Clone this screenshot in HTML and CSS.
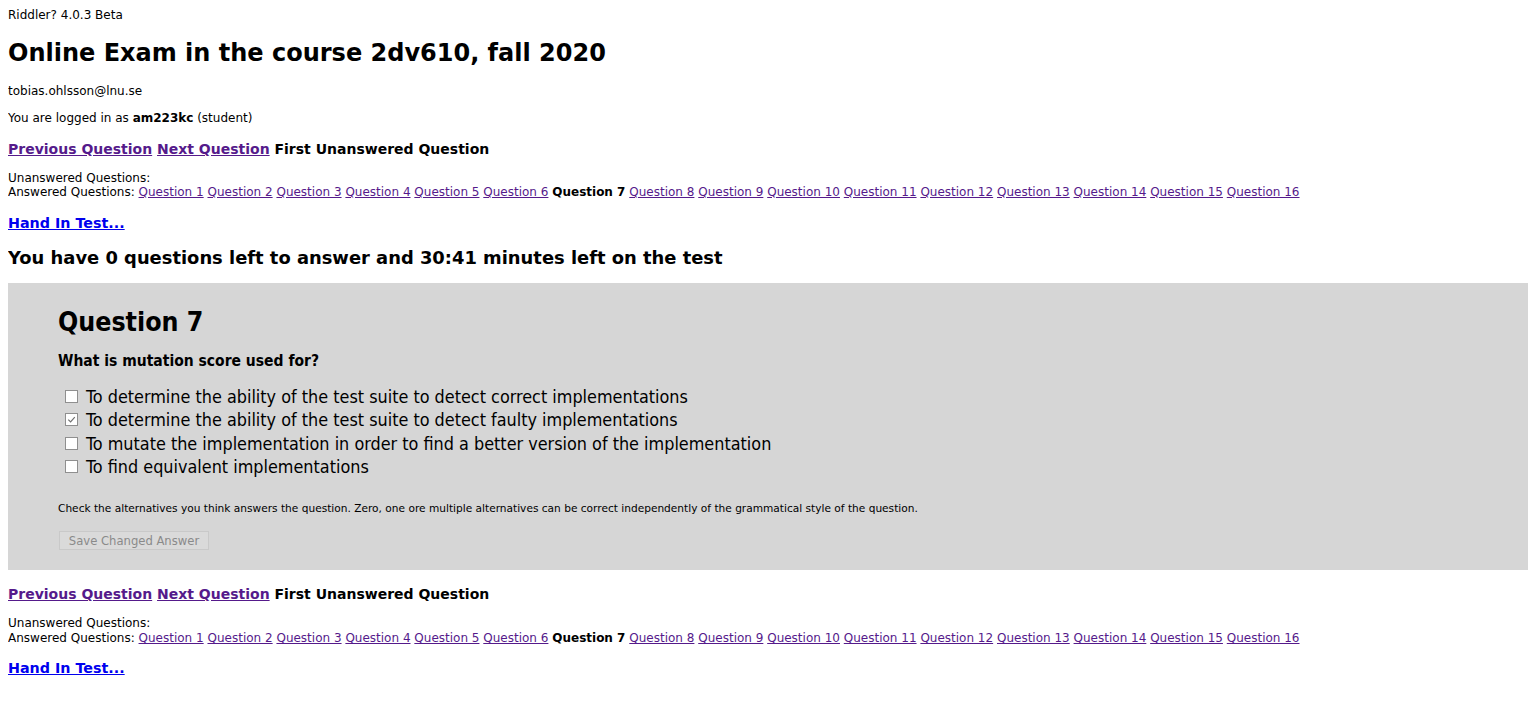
FILE: index.html
```html
<!DOCTYPE html>
<html lang="en">
<head>
<meta charset="utf-8">
<title>Riddler? 4.0.3 Beta</title>
<link rel="stylesheet" href="styles.css">
</head>
<body>
<p class="version">Riddler? 4.0.3 Beta</p>
<h1 class="title">Online Exam in the course 2dv610, fall 2020</h1>
<p class="small email">tobias.ohlsson@lnu.se</p>
<p class="small login">You are logged in as <b>am223kc</b> (student)</p>

<div class="nav"><a href="#" class="visited">Previous Question</a> <a href="#" class="visited">Next Question</a> <span>First Unanswered Question</span></div>
<div class="qlist">
  <div>Unanswered Questions:</div>
  <div>Answered Questions: <a href="#">Question 1</a> <a href="#">Question 2</a> <a href="#">Question 3</a> <a href="#">Question 4</a> <a href="#">Question 5</a> <a href="#">Question 6</a> <b>Question 7</b> <a href="#">Question 8</a> <a href="#">Question 9</a> <a href="#">Question 10</a> <a href="#">Question 11</a> <a href="#">Question 12</a> <a href="#">Question 13</a> <a href="#">Question 14</a> <a href="#">Question 15</a> <a href="#">Question 16</a></div>
</div>
<div class="handin"><a href="#">Hand In Test...</a></div>
<h2 class="status">You have 0 questions left to answer and 30:41 minutes left on the test</h2>

<div class="qbox">
  <h2 class="qtitle">Question 7</h2>
  <p class="prompt">What is mutation score used for?</p>
  <ul class="options">
    <li><span class="cb"></span>To determine the ability of the test suite to detect correct implementations</li>
    <li><span class="cb checked"><svg viewBox="0 0 12 12" width="11" height="11"><path d="M2.5 6.2 L5 8.6 L9.6 3.4" fill="none" stroke="#707070" stroke-width="1.3"/></svg></span>To determine the ability of the test suite to detect faulty implementations</li>
    <li><span class="cb"></span>To mutate the implementation in order to find a better version of the implementation</li>
    <li><span class="cb"></span>To find equivalent implementations</li>
  </ul>
  <p class="note">Check the alternatives you think answers the question. Zero, one ore multiple alternatives can be correct independently of the grammatical style of the question.</p>
  <button class="save" disabled>Save Changed Answer</button>
</div>

<div class="nav nav-bottom"><a href="#" class="visited">Previous Question</a> <a href="#" class="visited">Next Question</a> <span>First Unanswered Question</span></div>
<div class="qlist qlist-bottom">
  <div>Unanswered Questions:</div>
  <div>Answered Questions: <a href="#">Question 1</a> <a href="#">Question 2</a> <a href="#">Question 3</a> <a href="#">Question 4</a> <a href="#">Question 5</a> <a href="#">Question 6</a> <b>Question 7</b> <a href="#">Question 8</a> <a href="#">Question 9</a> <a href="#">Question 10</a> <a href="#">Question 11</a> <a href="#">Question 12</a> <a href="#">Question 13</a> <a href="#">Question 14</a> <a href="#">Question 15</a> <a href="#">Question 16</a></div>
</div>
<div class="handin handin-bottom"><a href="#">Hand In Test...</a></div>
</body>
</html>
```

FILE: styles.css
```css
html, body {
  background: #ffffff;
}
body {
  margin: 8px;
  font-family: "DejaVu Sans", sans-serif;
  font-size: 12px;
  color: #000;
}
p, h1, h2, ul {
  margin: 0;
  padding: 0;
}
.version {
  font-size: 12px;
  line-height: 14px;
}
.title {
  font-weight: bold;
  font-size: 24px;
  line-height: 30px;
  margin-top: 16px;
}
.small {
  font-size: 12px;
  line-height: 14px;
}
.email {
  margin-top: 16px;
}
.login {
  margin-top: 13px;
}
.login b {
  font-size: 12px;
}
.nav {
  font-weight: bold;
  font-size: 14px;
  line-height: 18px;
  margin-top: 15px;
}
.nav a {
  color: #551a8b;
}
.nav span {
  color: #000;
}
.nav-bottom {
  margin-top: 15px;
}
.qlist {
  font-size: 12px;
  line-height: 14px;
  margin-top: 13px;
}
.qlist-bottom {
  line-height: 15px;
}
.qlist a {
  color: #551a8b;
}
.qlist b {
  font-size: 12px;
}
.handin {
  font-weight: bold;
  font-size: 14.3px;
  line-height: 18px;
  margin-top: 15px;
}
.handin-bottom {
  margin-top: 13px;
}
.handin a {
  color: #0000ee;
}
.status {
  font-weight: bold;
  font-size: 17.9px;
  line-height: 24px;
  margin-top: 14px;
}
.qbox {
  background: #d6d6d6;
  margin-top: 13px;
  padding: 24px 50px 20px;
}
.qtitle {
  font-family: "DejaVu Sans Condensed", "DejaVu Sans", sans-serif;
  font-weight: bold;
  font-size: 26.5px;
  line-height: 30px;
}
.prompt {
  font-family: "DejaVu Sans Condensed", "DejaVu Sans", sans-serif;
  font-weight: bold;
  font-size: 15.5px;
  line-height: 18px;
  margin-top: 15px;
}
.options {
  list-style: none;
  margin-top: 15px;
  padding-left: 7px;
}
.options li {
  display: flex;
  align-items: center;
  font-family: "DejaVu Sans Condensed", "DejaVu Sans", sans-serif;
  font-size: 17.85px;
  line-height: 23.33px;
}
.cb {
  width: 11px;
  height: 11px;
  border: 1px solid #8f8f8f;
  background: #ffffff;
  margin-right: 8px;
  display: flex;
  align-items: center;
  justify-content: center;
  flex: none;
}
.cb svg {
  display: block;
}
.note {
  font-size: 10.6px;
  line-height: 13px;
  margin-top: 24px;
}
.save {
  display: block;
  margin-top: 16px;
  margin-left: 1px;
  width: 150px;
  height: 19px;
  padding: 0;
  font-family: "DejaVu Sans Condensed", "DejaVu Sans", sans-serif;
  font-size: 12.9px;
  color: #8a8a8a;
  background: #dadada;
  border: 1px solid #c9c9c9;
  border-radius: 0;
}
```
